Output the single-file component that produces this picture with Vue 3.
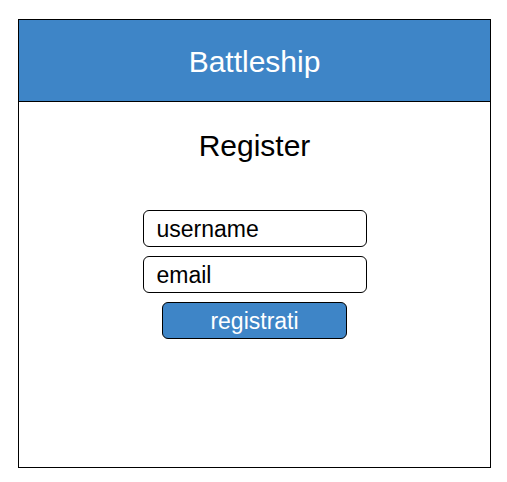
<script setup>
import { ref } from 'vue'

const username = ref('')
const email = ref('')
</script>

<template>
  <div class="page">
    <div class="card">
      <header class="banner">
        <h1 class="title">Battleship</h1>
      </header>
      <main class="content">
        <h2 class="title">Register</h2>
        <form class="form" @submit.prevent>
          <input v-model="username" class="control" type="text" name="username" placeholder="username" aria-label="username" />
          <input v-model="email" class="control" type="email" name="email" placeholder="email" aria-label="email" />
          <button class="control submit" type="submit">registrati</button>
        </form>
      </main>
    </div>
  </div>
</template>

<style>
body {
  background: #fff;
}
</style>

<style scoped>
.page,
.page * {
  box-sizing: border-box;
}

.page {
  display: flex;
  min-height: 100vh;
  padding: 19px 16px 14px 18px;
  font-family: "Liberation Sans", Arial, sans-serif;
  color: #000;
}

.card {
  flex: 1;
  border: 1px solid #000;
}

.banner {
  padding: 25px 16px 22px;
  border-bottom: 1px solid #000;
  background: #3e85c7;
  color: #fff;
}

.title {
  margin: 0;
  font-size: 30px;
  font-weight: 400;
  line-height: 34px;
  text-align: center;
}

.content {
  padding: 27px 16px;
}

.form {
  display: flex;
  flex-direction: column;
  align-items: center;
  gap: 9px;
  width: 100%;
  max-width: 224px;
  margin: 47px auto 0;
}

.control {
  width: 100%;
  height: 37px;
  margin: 0;
  padding: 2px 13px 0;
  border: 1px solid #000;
  border-radius: 6px;
  background: #fff;
  color: #000;
  font-family: inherit;
  font-size: 23px;
  line-height: 27px;
}

.control::placeholder {
  color: #000;
  opacity: 1;
}

.submit {
  width: 83%;
  background: #3e85c7;
  color: #fff;
}
</style>
